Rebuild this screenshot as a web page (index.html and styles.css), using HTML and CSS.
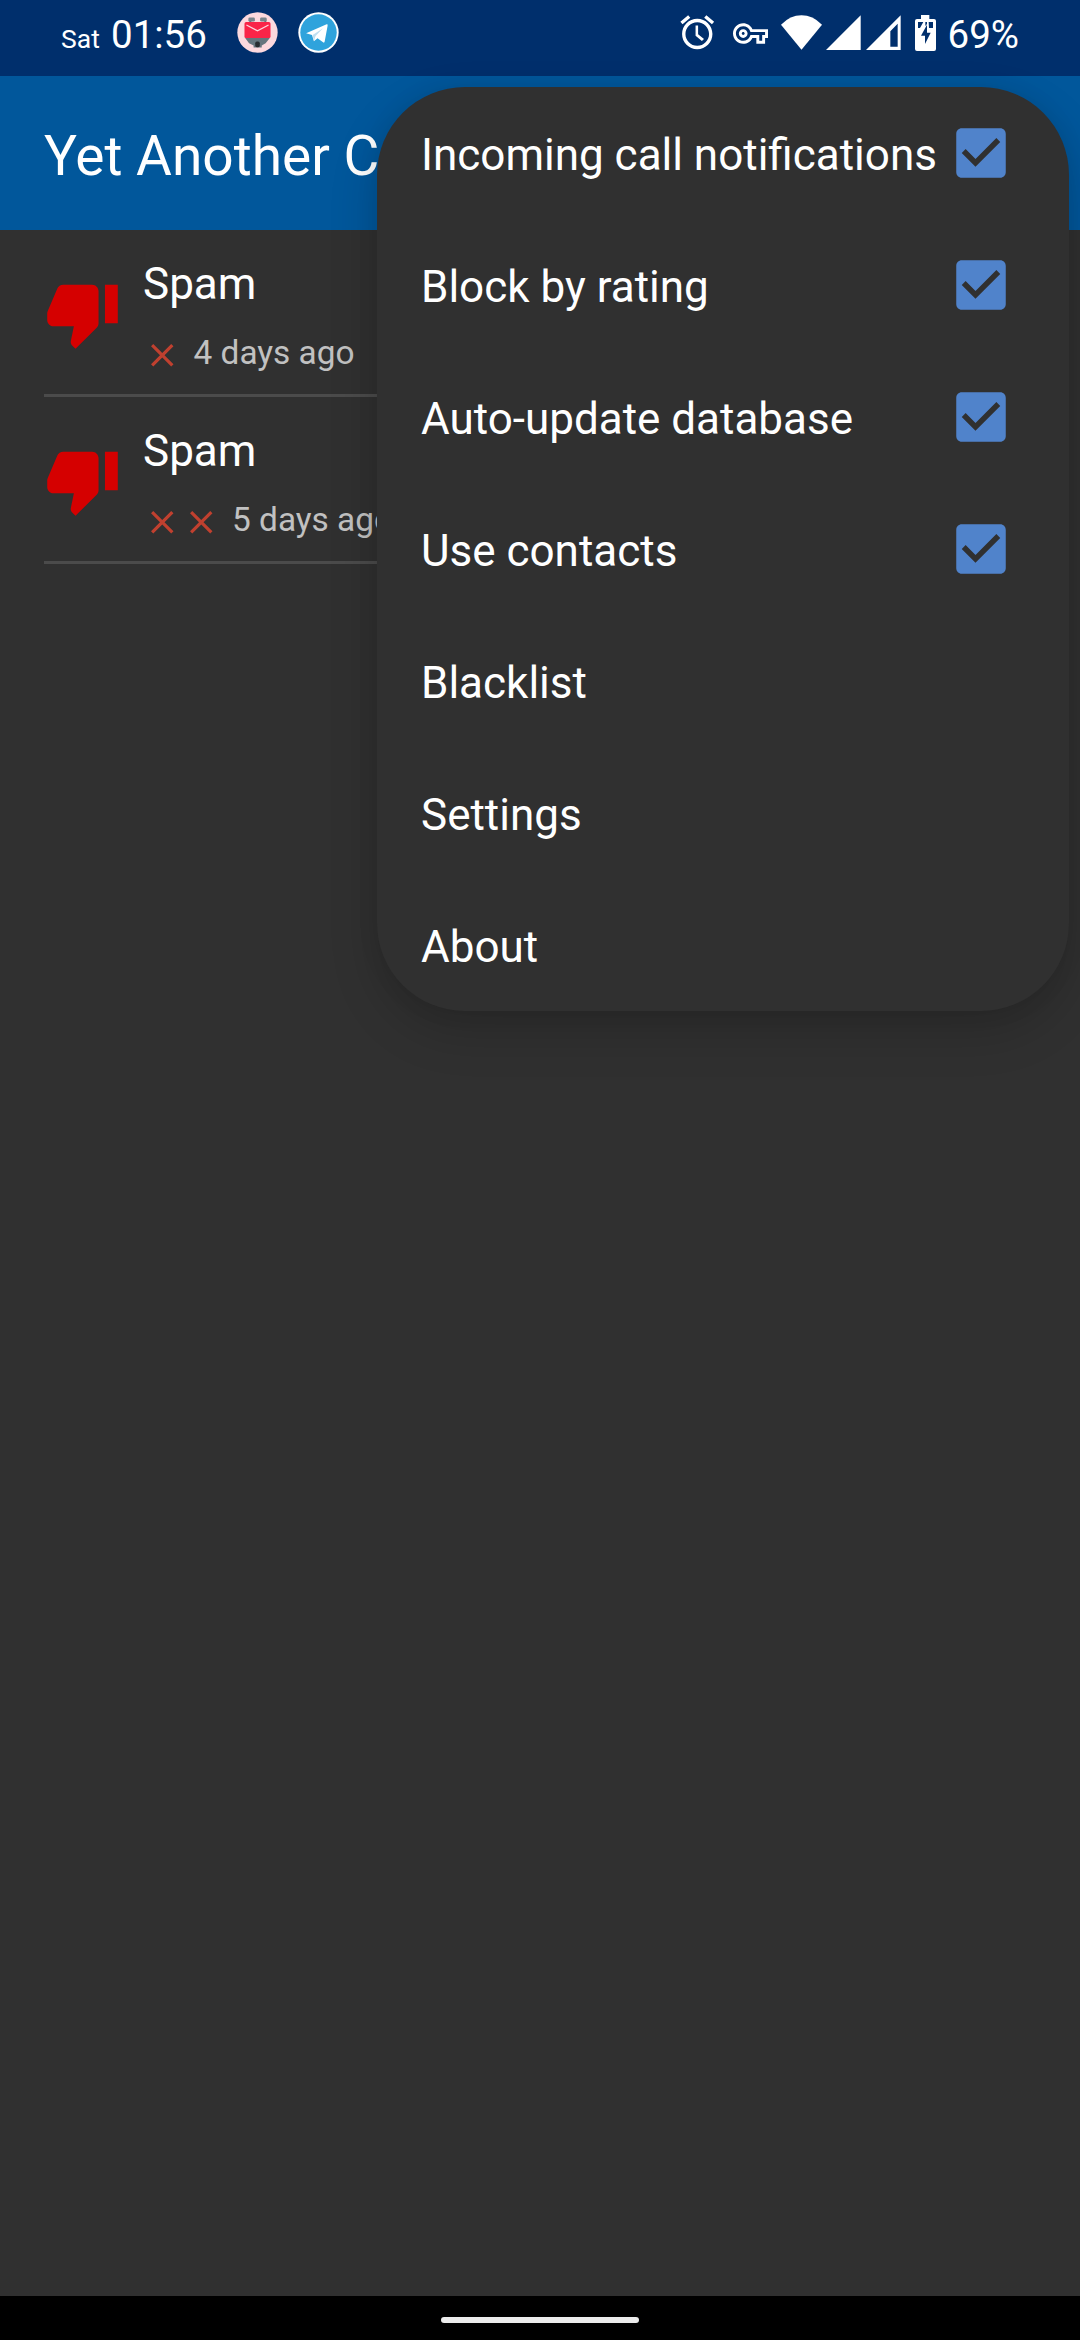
FILE: index.html
```html
<!DOCTYPE html>
<html lang="en">
<head>
<meta charset="utf-8">
<title>Call Blocker</title>
<link rel="stylesheet" href="styles.css">
</head>
<body>
<svg class="defs" width="0" height="0">
  <symbol id="thumb-down" viewBox="0 0 24 24"><path d="M15 3H6c-.83 0-1.54.5-1.84 1.22l-3.02 7.05c-.09.23-.14.47-.14.73v2c0 1.1.9 2 2 2h6.31l-.95 4.57-.03.32c0 .41.17.79.44 1.06L9.83 23l6.59-6.59c.36-.36.58-.86.58-1.41V5c0-1.1-.9-2-2-2zm4 0v12h4V3h-4z"/></symbol>
  <symbol id="cross" viewBox="0 0 24 24"><path d="M19 6.41 17.59 5 12 10.59 6.41 5 5 6.41 10.59 12 5 17.59 6.41 19 12 13.41 17.59 19 19 17.59 13.41 12z"/></symbol>
  <symbol id="checkbox" viewBox="0 0 24 24"><path d="M19 3H5c-1.11 0-2 .9-2 2v14c0 1.1.89 2 2 2h14c1.11 0 2-.9 2-2V5c0-1.1-.89-2-2-2zm-9 14l-5-5 1.41-1.41L10 14.17l7.59-7.59L19 8l-9 9z"/></symbol>
</svg>
<div class="screen">
  <header class="status">
    <span class="day">Sat</span>
    <span class="time">01:56</span>
    <svg class="notif mail" viewBox="0 0 126 126">
      <circle cx="63" cy="63" r="62" fill="#fcd9de"/>
      <path d="M41 20v14M87 20v14" stroke="#5e6f78" stroke-width="6"/>
      <rect x="35" y="17" width="20" height="12" rx="4" fill="#78858c"/>
      <rect x="71" y="17" width="20" height="12" rx="4" fill="#78858c"/>
      <path d="M24 78h78L88 96 76 103v6H51v-6L37 96z" fill="#65767e"/>
      <rect x="23" y="31" width="80" height="49" rx="5" fill="#fa2448"/>
      <path d="M29 40l34 18 34-18" fill="none" stroke="#fdd8df" stroke-width="4"/>
      <rect x="56" y="91" width="14" height="17" rx="5" fill="#282d30"/>
    </svg>
    <svg class="notif" viewBox="0 0 126 126">
      <circle cx="63" cy="63" r="62" fill="#fff"/>
      <circle cx="63" cy="63" r="56" fill="#2fa3dc"/>
      <path d="M25 65 88 38q4-1 3 4L82 91q-1 5-5 2L60 81 49 90 43 71z" fill="#fff"/>
      <path d="M45 71 77 50 54 74 49 89z" fill="#bfdff1"/>
    </svg>
    <span class="grow"></span>
    <svg class="alarm" viewBox="0 0 24 24"><path d="M22 5.72l-4.6-3.86-1.29 1.53 4.6 3.86L22 5.72zM7.88 3.39L6.6 1.86 2 5.71l1.29 1.53 4.59-3.85zM12.5 8H11v6l3.75 3.25 1.25-1.23-3.5-2.77V8zM12 4c-4.97 0-9 4.03-9 9s4.02 9 9 9c4.97 0 9-4.03 9-9s-4.03-9-9-9zm0 16c-3.87 0-7-3.13-7-7s3.13-7 7-7 7 3.13 7 7-3.13 7-7 7z"/></svg>
    <svg class="key" viewBox="0 0 24 24"><path d="M22 19h-6v-4h-2.68c-1.14 2.42-3.6 4-6.32 4-3.86 0-7-3.14-7-7s3.14-7 7-7c2.72 0 5.17 1.58 6.32 4H24v6h-2v4zm-4-2h2v-4h2v-2H11.94l-.23-.67C11.01 8.34 9.11 7 7 7c-2.76 0-5 2.24-5 5s2.24 5 5 5c2.11 0 4.01-1.34 4.71-3.33l.23-.67H18v4zM7 15c-1.65 0-3-1.35-3-3s1.35-3 3-3 3 1.35 3 3-1.35 3-3 3zm0-4c-.55 0-1 .45-1 1s.45 1 1 1 1-.45 1-1-.45-1-1-1z"/></svg>
    <svg class="wifi" viewBox="0 0 123 105"><path d="M0 29Q28 1 61.5 1T123 29L61.5 104z"/></svg>
    <svg class="signal" viewBox="0 0 105 105"><path d="M0 105 104 1V105z"/></svg>
    <svg class="signal" viewBox="0 0 105 105"><path fill-rule="evenodd" d="M0 105 104 1V105zM73 49V95H95V26z"/></svg>
    <svg class="battery" viewBox="0 0 63 108"><path fill-rule="evenodd" d="M18 0h25v12h14q6 0 6 6v84q0 6-6 6H6q-6 0-6-6V18q0-6 6-6h12zM9 21V39H15L25 21zM31 21H36V27L31 33zM41 21H54V39H42zM36 29V53H47L30 87V62H18z"/></svg>
    <span class="percent">69%</span>
  </header>
  <div class="toolbar"><h1>Yet Another C</h1></div>
  <main class="calls">
    <article class="call">
      <svg class="thumb"><use href="#thumb-down"/></svg>
      <div class="info">
        <div class="name">Spam</div>
        <div class="meta"><svg class="x"><use href="#cross"/></svg><span>4 days ago</span></div>
      </div>
    </article>
    <article class="call">
      <svg class="thumb"><use href="#thumb-down"/></svg>
      <div class="info">
        <div class="name">Spam</div>
        <div class="meta"><svg class="x"><use href="#cross"/></svg><svg class="x"><use href="#cross"/></svg><span>5 days ago</span></div>
      </div>
    </article>
  </main>
  <footer class="nav"><span class="pill"></span></footer>
  <div class="menu">
    <div class="item"><span>Incoming call notifications</span><svg><use href="#checkbox"/></svg></div>
    <div class="item"><span>Block by rating</span><svg><use href="#checkbox"/></svg></div>
    <div class="item"><span>Auto-update database</span><svg><use href="#checkbox"/></svg></div>
    <div class="item"><span>Use contacts</span><svg><use href="#checkbox"/></svg></div>
    <div class="item"><span>Blacklist</span></div>
    <div class="item"><span>Settings</span></div>
    <div class="item"><span>About</span></div>
  </div>
</div>
</body>
</html>
```
FILE: styles.css
```css
* { box-sizing: border-box; }
body {
  margin: 0;
  background: #303030;
  color: #fff;
  font-family: Roboto, "Noto Sans", sans-serif;
}
svg { display: block; flex: none; fill: currentColor; }
.defs { position: absolute; }
.screen {
  position: relative;
  display: flex;
  flex-direction: column;
  width: 1080px;
  height: 2340px;
  overflow: hidden;
}

/* status bar */
.status {
  display: flex;
  align-items: flex-start;
  height: 76px;
  padding: 12px 61px 0 61px;
  background: #002f6c;
  white-space: nowrap;
}
.day { font-size: 26.5px; line-height: 30px; margin-top: 12px; width: 50px; }
.time, .percent { font-size: 38.5px; line-height: 46px; }
.time { width: 126px; }
.notif { width: 41px; height: 41px; margin-right: 20px; }
.grow { flex: 1; }
.alarm { width: 40.5px; height: 40.5px; margin-right: 15px; }
.key { width: 35px; height: 35px; margin: 4px 13px 0 0; }
.wifi { width: 41px; height: 35px; margin: 3px 4px 0 0; }
.signal { width: 35px; height: 35px; margin: 3px 5.5px 0 0; }
.battery { width: 21px; height: 36px; margin: 3px 12px 0 8px; }

/* app bar */
.toolbar {
  display: flex;
  align-items: center;
  height: 154px;
  padding: 6px 44px 0;
  background: #01579b;
}
.toolbar h1 { margin: 0; font-size: 55px; font-weight: 400; line-height: 64px; }

/* call list */
.calls { flex: 1; padding: 0 44px; }
.call {
  display: flex;
  align-items: center;
  height: 167px;
  border-bottom: 3px solid #4b4b4b;
}
.thumb { width: 77px; height: 77px; margin: 2px 22px 0 0; color: #d50000; }
.info { padding-top: 7px; }
.name { font-size: 44px; line-height: 52px; margin-top: 1px; }
.meta { display: flex; align-items: center; margin-top: 22px; }
.meta span { margin: 0 0 2px 12px; font-size: 33.4px; line-height: 39px; color: #c1c1c1; }
.x { width: 38.5px; height: 38.5px; margin-top: 4px; color: #c0402f; }

/* overflow menu */
.menu {
  position: absolute;
  top: 87px;
  left: 377px;
  width: 692px;
  border-radius: 88px;
  background: #303030;
  box-shadow: 0 20px 48px rgba(0, 0, 0, .18), 0 0 22px rgba(0, 0, 0, .07);
}
.item {
  display: flex;
  align-items: center;
  justify-content: space-between;
  height: 132px;
  padding: 0 55px 0 44px;
  font-size: 44px;
}
.item span { line-height: 52px; padding-top: 3px; white-space: nowrap; }
.item svg { width: 66px; height: 66px; color: #5083cb; }

/* gesture bar */
.nav { display: flex; justify-content: center; height: 44px; padding-top: 21px; background: #000; }
.pill { width: 198px; height: 6px; border-radius: 3px; background: #ebebeb; }
```
